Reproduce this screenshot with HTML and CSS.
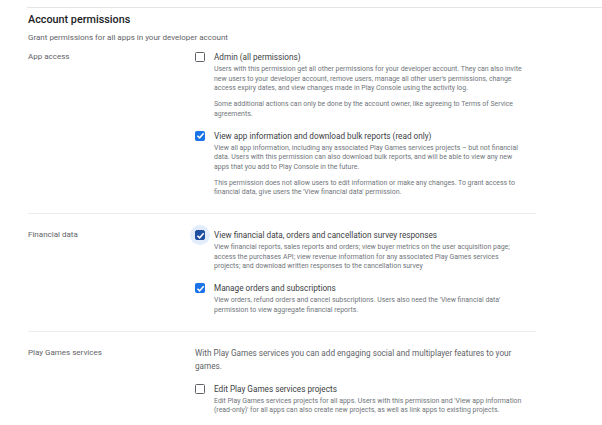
FILE: index.html
```html
<!DOCTYPE html>
<html lang="en">
<head>
  <meta charset="UTF-8">
  <meta name="viewport" content="width=device-width, initial-scale=1.0">
  <title>Account permissions</title>
  <link rel="stylesheet" href="styles.css">
</head>
<body>
  <div class="top-rule"></div>

  <div class="page">
    <h2>Account permissions</h2>
    <p class="subtitle">Grant permissions for all apps in your developer account</p>

    <!-- App access -->
    <div class="section first">
      <div class="label">App access</div>
      <div class="options">
        <div class="option">
          <span class="box"></span>
          <div class="text">
            <div class="title">Admin (all permissions)</div>
            <p class="desc">Users with this permission get all other permissions for your developer account. They can also invite new users to your developer account, remove users, manage all other user's permissions, change access expiry dates, and view changes made in Play Console using the activity log.</p>
            <p class="desc">Some additional actions can only be done by the account owner, like agreeing to Terms of Service agreements.</p>
          </div>
        </div>
        <div class="option">
          <span class="box checked">
            <svg viewBox="0 0 10 10"><path d="M2.2 5.2 4.2 7.1 7.9 3"/></svg>
          </span>
          <div class="text">
            <div class="title">View app information and download bulk reports (read only)</div>
            <p class="desc">View all app information, including any associated Play Games services projects – but not financial data. Users with this permission can also download bulk reports, and will be able to view any new apps that you add to Play Console in the future.</p>
            <p class="desc">This permission does not allow users to edit information or make any changes. To grant access to financial data, give users the 'View financial data' permission.</p>
          </div>
        </div>
      </div>
    </div>

    <div class="rule"></div>

    <!-- Financial data -->
    <div class="section">
      <div class="label">Financial data</div>
      <div class="options">
        <div class="option">
          <span class="box checked focused">
            <svg viewBox="0 0 10 10"><path d="M2.2 5.2 4.2 7.1 7.9 3"/></svg>
          </span>
          <div class="text">
            <div class="title">View financial data, orders and cancellation survey responses</div>
            <p class="desc">View financial reports, sales reports and orders; view buyer metrics on the user acquisition page; access the purchases API; view revenue information for any associated Play Games services projects; and download written responses to the cancellation survey</p>
          </div>
        </div>
        <div class="option">
          <span class="box checked">
            <svg viewBox="0 0 10 10"><path d="M2.2 5.2 4.2 7.1 7.9 3"/></svg>
          </span>
          <div class="text">
            <div class="title">Manage orders and subscriptions</div>
            <p class="desc">View orders, refund orders and cancel subscriptions. Users also need the 'View financial data' permission to view aggregate financial reports.</p>
          </div>
        </div>
      </div>
    </div>

    <div class="rule"></div>

    <!-- Play Games services -->
    <div class="section">
      <div class="label">Play Games services</div>
      <div class="options">
        <p class="intro">With Play Games services you can add engaging social and multiplayer features to your games.</p>
        <div class="option">
          <span class="box"></span>
          <div class="text">
            <div class="title">Edit Play Games services projects</div>
            <p class="desc">Edit Play Games services projects for all apps. Users with this permission and 'View app information (read-only)' for all apps can also create new projects, as well as link apps to existing projects.</p>
          </div>
        </div>
      </div>
    </div>
  </div>
</body>
</html>
```

FILE: styles.css
```css
body {
  margin: 0;
  font-family: Roboto, "Noto Sans", Arial, sans-serif;
  background: #fff;
  color: #3c4043;
}
p {
  margin: 0;
}
.top-rule {
  height: 1px;
  margin: 7px 0 0 27px;
  background: #e4e4e4;
}
.page {
  padding-left: 28px;
  width: 508px;
}
h2 {
  margin: 5px 0 0;
  font-size: 10.8px;
  line-height: 14px;
  font-weight: 500;
  color: #202124;
}
.subtitle {
  margin-top: 5px;
  font-size: 8px;
  line-height: 12px;
  color: #5f6368;
}
.section {
  display: flex;
}
.section.first {
  margin-top: 7px;
}
.label {
  width: 167px;
  flex-shrink: 0;
  font-size: 8px;
  line-height: 12px;
  color: #5f6368;
}
.options {
  flex: 1;
  padding-right: 10px;
}
.option {
  display: flex;
  gap: 9px;
  margin-bottom: 10px;
}
.box {
  position: relative;
  width: 8px;
  height: 8px;
  margin-top: 1px;
  flex-shrink: 0;
  border: 1.5px solid #5f6368;
  border-radius: 1.5px;
}
.box.checked {
  border-color: #1a73e8;
  background: #1a73e8;
}
.box.focused {
  border-color: #1f4fa0;
  background: #1f4fa0;
  border-radius: 2px;
}
.box.focused::before {
  content: "";
  position: absolute;
  left: 50%;
  top: 50%;
  width: 20px;
  height: 20px;
  margin: -10px 0 0 -10px;
  border-radius: 50%;
  background: #e3ecfb;
  z-index: -1;
}
.box svg {
  position: absolute;
  inset: -1.5px;
  width: 11px;
  height: 11px;
}
.box svg path {
  fill: none;
  stroke: #fff;
  stroke-width: 1.4;
}
.text {
  flex: 1;
}
.title {
  font-size: 8.2px;
  line-height: 12px;
  color: #3c4043;
}
.desc {
  margin-top: 2px;
  font-size: 6.95px;
  line-height: 9.7px;
  color: #70757a;
}
.desc + .desc {
  margin-top: 6px;
}
.intro {
  margin-bottom: 10px;
  font-size: 8.2px;
  line-height: 13px;
  color: #5f6368;
}
.rule {
  height: 1px;
  margin: 5px 0 15px;
  background: #ebebeb;
}
```
